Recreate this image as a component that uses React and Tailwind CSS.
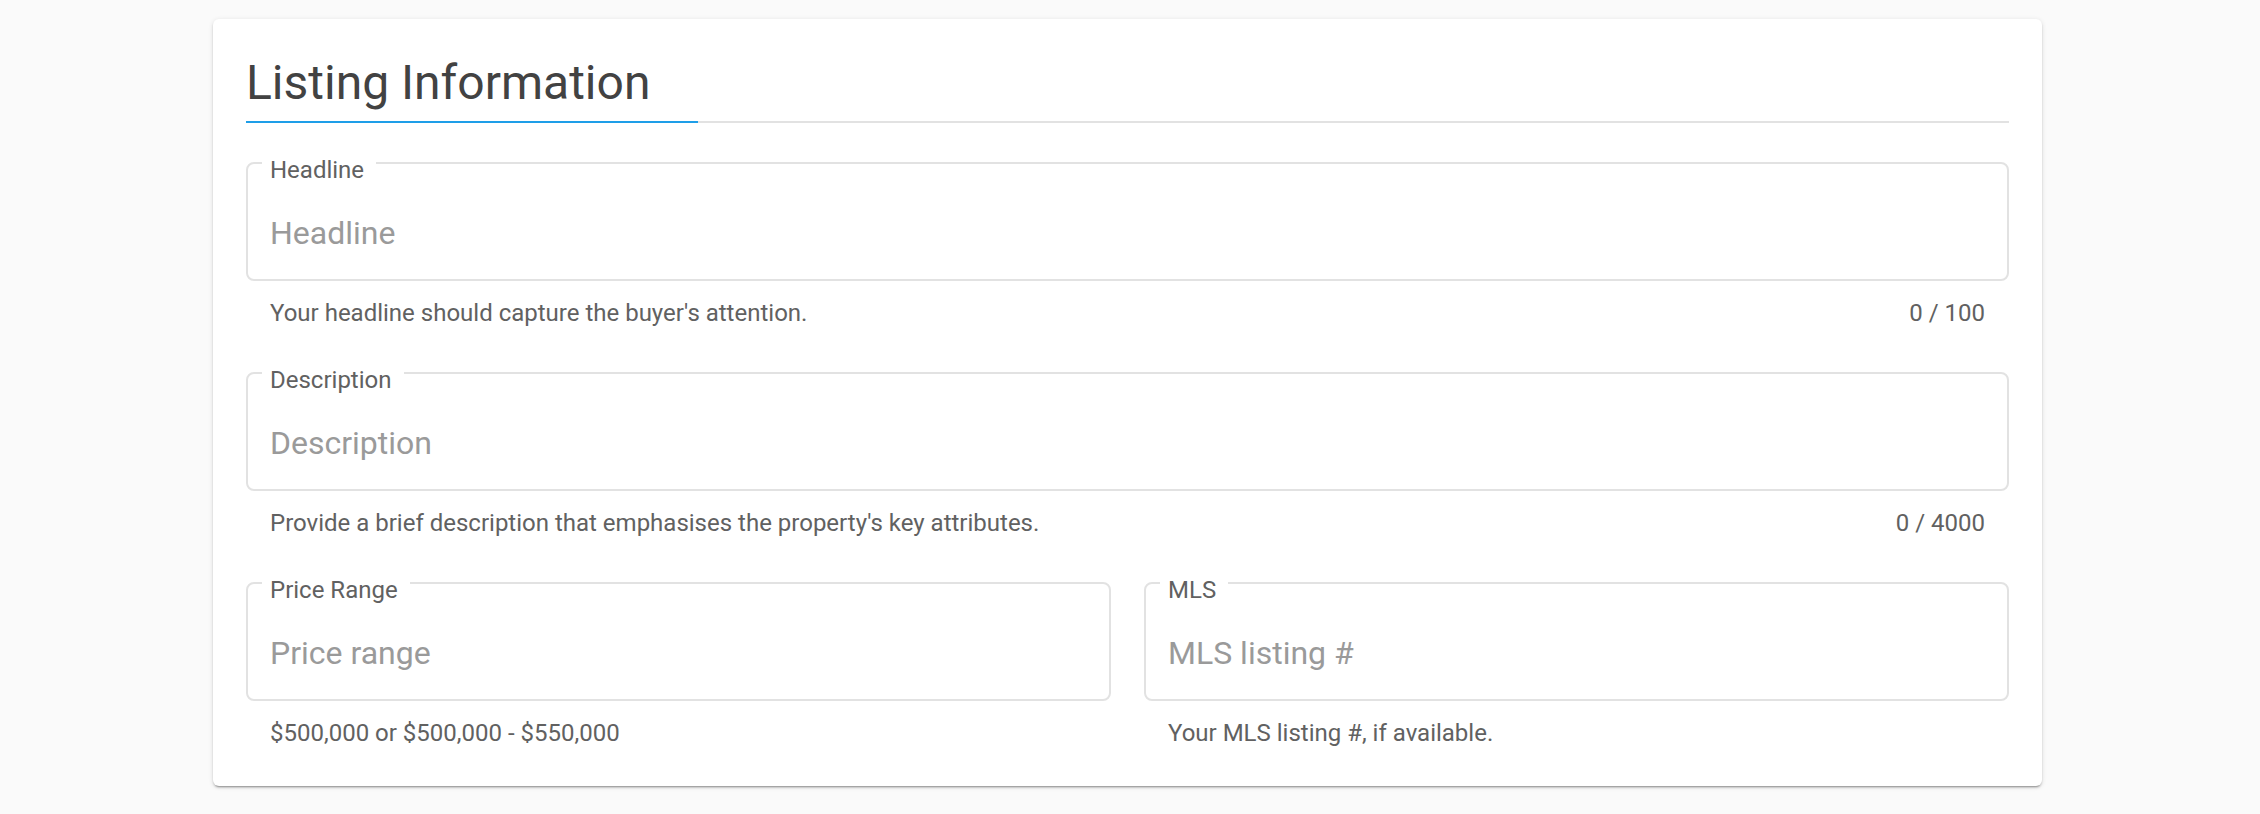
import React from "react";

const fields = [
  {
    label: "Headline",
    placeholder: "Headline",
    help: "Your headline should capture the buyer's attention.",
    count: "0 / 100",
  },
  {
    label: "Description",
    placeholder: "Description",
    help: "Provide a brief description that emphasises the property's key attributes.",
    count: "0 / 4000",
  },
];

function OutlinedField({ label, placeholder, help, count }) {
  return (
    <div>
      <div className="relative h-[119px] rounded-[8px] border-2 border-[#e2e2e2] pl-[22px] pr-[22px] pt-[49px]">
        <span className="absolute left-[14px] top-[-6px] bg-white pl-2 pr-3 text-[24px] leading-none text-[#616161]">
          {label}
        </span>
        <input
          className="block h-[40px] w-full bg-transparent text-[32px] leading-[40px] text-[#424242] outline-none placeholder:text-[#9a9a9a]"
          placeholder={placeholder}
        />
      </div>
      <div className="mt-[20px] flex justify-between px-[24px] text-[24px] leading-[24px] text-[#616161]">
        <span>{help}</span>
        {count && <span>{count}</span>}
      </div>
    </div>
  );
}

export default function App() {
  return (
    <div
      className="min-h-screen bg-[#fafafa] pl-[213px] pt-[19px] pb-[29px]"
      style={{ fontFamily: "Roboto, 'Noto Sans', Arial, sans-serif" }}
    >
      <div className="w-[1829px] rounded-[6px] bg-white px-[33px] pt-[36px] pb-[41px] shadow-[0_3px_1px_-2px_rgba(0,0,0,0.2),0_2px_2px_0_rgba(0,0,0,0.14),0_1px_5px_0_rgba(0,0,0,0.12)]">
        <h2 className="text-[48px] leading-[56px] font-normal text-[#424242]">
          Listing Information
        </h2>
        <div className="mt-[10px] flex h-[2px]">
          <div className="w-[452px] bg-[#1e9ee8]" />
          <div className="flex-1 bg-[#e2e2e2]" />
        </div>

        <div className="mt-[39px] flex flex-col gap-[47px]">
          {fields.map((f) => (
            <OutlinedField key={f.label} {...f} />
          ))}
          <div className="grid grid-cols-2 gap-[33px]">
            <OutlinedField
              label="Price Range"
              placeholder="Price range"
              help="$500,000 or $500,000 - $550,000"
            />
            <OutlinedField
              label="MLS"
              placeholder="MLS listing #"
              help="Your MLS listing #, if available."
            />
          </div>
        </div>
      </div>
    </div>
  );
}
